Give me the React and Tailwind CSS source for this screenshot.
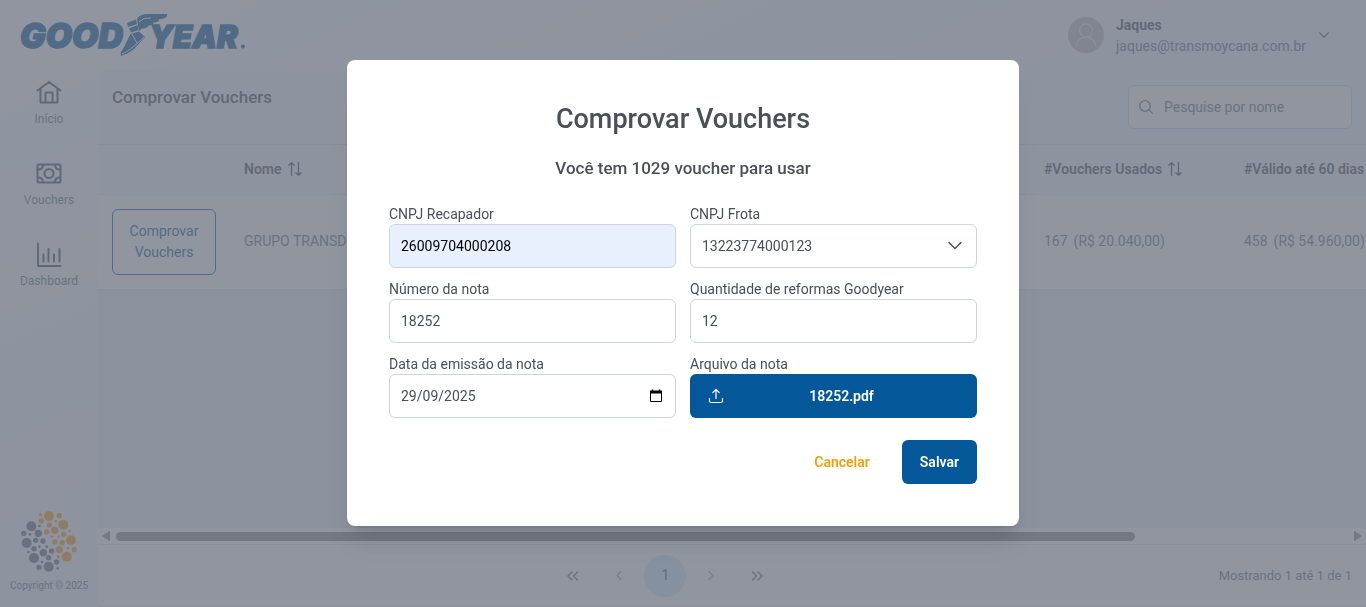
import React from "react";

const orangeDots = [
  [121, 74, 5], [147, 78, 15], [178, 77, 8], [124, 93, 8], [168, 93, 4], [148, 105, 8], [190, 104, 15],
  [164, 121, 11], [140, 126, 8], [191, 133, 8], [209, 123, 4], [155, 140, 4], [176, 140, 4], [213, 151, 15],
  [165, 156, 8], [187, 158, 8], [178, 179, 11], [204, 175, 4], [223, 179, 8], [175, 200, 5], [200, 200, 15],
];
const grayDots = [
  [94, 109, 15], [118, 108, 4], [71, 130, 8], [90, 133, 4], [115, 130, 11], [107, 151, 8], [129, 153, 8],
  [80, 159, 15], [102, 176, 8], [118, 170, 4], [140, 170, 4], [85, 186, 4], [155, 183, 8], [130, 188, 11],
  [102, 204, 15], [146, 203, 8], [126, 216, 4], [170, 216, 8], [146, 230, 15], [117, 232, 8], [173, 235, 4],
];

function DotsMark() {
  return (
    <svg viewBox="60 60 174 189" className="w-[58px] h-[63px]" aria-hidden="true">
      {orangeDots.map(([x, y, r]) => <circle key={`${x}-${y}`} cx={x} cy={y} r={r} fill="#f5a11b" />)}
      {grayDots.map(([x, y, r]) => <circle key={`${x}-${y}`} cx={x} cy={y} r={r} fill="#6a6c74" />)}
    </svg>
  );
}

function Logo() {
  return (
    <svg viewBox="0 0 228 44" className="w-[228px] h-11" role="img" aria-label="Goodyear">
      <g fill="#04589a" stroke="#04589a" strokeWidth="1.5" fontWeight="900" fontStyle="italic" fontFamily="Inter, sans-serif">
        <text x="0" y="35" fontSize="34">GOOD</text>
        <text x="129" y="35" fontSize="31">YEAR</text>
      </g>
      <g fill="#04589a">
        <path d="M107 10 L116 6.500 L117 11 L108 14 Z" />
        <path d="M109 15.500 L117.500 12 L118.500 17 L111 19.500 Z" />
        <path d="M117 6 C119 2 124 .5 130 1 L147 1 C148 4.500 143 6 138 6.500 C141 7.500 137 9.500 133 9.500 C135 10.500 131 12.500 128 12.500 C129 14.500 125 15.500 122 15.500 L119 18 L118 12 Z" />
        <path d="M110.500 21 L119 18.500 L125 24 L114 36 C109 40 104 42 101 43 C100 40 101 38 103 36 Z" />
      </g>
      <g stroke="#fff" fill="none" strokeWidth="1">
        <path d="M102 41 C109 38 117 31 124 24" />
        <path d="M112 21 L117 30 M119 9 L124 5.500 L131 5" />
      </g>
      <circle cx="223" cy="33.500" r="2" fill="#04589a" />
    </svg>
  );
}

function SortIcon() {
  return (
    <svg viewBox="0 0 14 14" className="w-[14px] h-[14px]" fill="none" stroke="currentColor" strokeWidth="1.400" strokeLinecap="round" strokeLinejoin="round" aria-hidden="true">
      <path d="M3.500 13.300V.8M.9 3.300L3.500.7l2.600 2.600M10.500.7v12.500M7.900 10.700l2.600 2.600 2.600-2.600" />
    </svg>
  );
}

function Chevron({ className, d = "M1 3.5L7 9.5L13 3.5" }) {
  return (
    <svg viewBox="0 0 14 14" className={className} fill="none" stroke="currentColor" strokeWidth="1.5" strokeLinecap="round" strokeLinejoin="round" aria-hidden="true">
      <path d={d} />
    </svg>
  );
}

const navItems = [
  { label: "Início", icon: <path d="M1.500 10.500L13 2l11.500 8.500M4.500 8.500V22.500h17V8.500M9.500 22.500V12.500h7v10" /> },
  {
    label: "Vouchers",
    icon: (
      <>
        <rect x="1.500" y="3.500" width="23" height="18" rx="1.500" />
        <circle cx="13" cy="12.500" r="4.500" />
        <path d="M2 8.500c3 0 5-1.500 5-4.500M24 8.500c-3 0-5-1.500-5-4.500M2 16.500c3 0 5 1.500 5 4.500M24 16.500c-3 0-5 1.500-5 4.500" />
      </>
    ),
  },
  { label: "Dashboard", icon: <path d="M2 1.500V24h22.500M7.500 12.500v7M12.500 7v12.500M18 12.500v7M23.500 7v12.500" /> },
];

function Sidebar() {
  return (
    <aside className="flex w-[98px] shrink-0 flex-col items-center justify-between pt-[10px] pb-3">
      <nav className="flex flex-col gap-8">
        {navItems.map((n) => (
          <a key={n.label} href="#" className="flex flex-col items-center gap-1 text-[#6c757d]">
            <svg viewBox="0 0 26 26" className="h-[26px] w-[26px] text-[#495057]" fill="none" stroke="currentColor" strokeWidth="2" strokeLinecap="round" strokeLinejoin="round" aria-hidden="true">{n.icon}</svg>
            <span className="text-[12px] leading-[19px]">{n.label}</span>
          </a>
        ))}
      </nav>
      <div className="flex flex-col items-center gap-1">
        <DotsMark />
        <span className="text-[10px] leading-[18px] text-[#6c757d]">Copyright © 2025</span>
      </div>
    </aside>
  );
}

function TopBar() {
  return (
    <header className="flex h-[70px] shrink-0 items-center justify-between pr-9 pl-5">
      <Logo />
      <button type="button" className="flex items-center gap-3 text-left text-[14px]">
        <svg viewBox="0 0 36 36" className="h-9 w-9" aria-hidden="true">
          <circle cx="18" cy="18" r="18" fill="#c0bfc2" />
          <g fill="none" stroke="#e4e4e6" strokeWidth="1.300">
            <circle cx="18" cy="13.500" r="6.500" />
            <path d="M8.500 29c0-5.500 4-9 9.500-9s9.500 3.500 9.500 9" strokeLinecap="round" />
          </g>
        </svg>
        <span className="flex flex-col pt-[2px]">
          <span className="leading-[21px] font-bold text-[#495057]">Jaques</span>
          <span className="leading-[21px] text-[#6c757d]">jaques@transmoycana.com.br</span>
        </span>
        <Chevron className="h-3 w-3 text-[#495057]" d="M2 4.500L7 9.500L12 4.500" />
      </button>
    </header>
  );
}

function VoucherTable() {
  return (
    <div className="min-h-0 flex-1 overflow-hidden bg-[#e9f1f7]">
      <table className="w-[1541px] table-fixed border-collapse text-left text-[14px] text-[#6c757d]">
        <colgroup>
          <col className="w-[132px]" />
          <col className="w-[800px]" />
          <col className="w-[200px]" />
          <col />
        </colgroup>
        <thead>
          <tr className="h-[49px] border-b border-[#dee2e6] bg-[#f8f9fa] text-[#495057]">
            <th className="px-[14px]" />
            <th className="px-[14px] font-semibold"><span className="flex items-center gap-[6px]">Nome <SortIcon /></span></th>
            <th className="px-[14px] font-semibold"><span className="flex items-center gap-[6px]">#Vouchers Usados <SortIcon /></span></th>
            <th className="px-[14px] font-semibold">#Válido até 60 dias</th>
          </tr>
        </thead>
        <tbody>
          <tr className="h-[95px] border-b border-[#dee2e6] bg-white">
            <td className="px-[14px]">
              <button type="button" className="w-full rounded-md border border-[#04589a] px-4 py-[11px] leading-[21px] text-[#04589a]">Comprovar Vouchers</button>
            </td>
            <td className="px-[14px]">GRUPO TRANSDE</td>
            <td className="px-[14px]"><span className="flex gap-[6px]"><span>167</span><span>(R$ 20.040,00)</span></span></td>
            <td className="px-[14px]"><span className="flex gap-[6px]"><span>458</span><span>(R$ 54.960,00)</span></span></td>
          </tr>
        </tbody>
      </table>
    </div>
  );
}

function ScrollTrack() {
  return (
    <div className="flex h-4 shrink-0 items-center gap-1 bg-white px-1 text-[#8b8b8b]">
      <svg viewBox="0 0 8 10" className="h-[10px] w-2" fill="currentColor" aria-hidden="true"><path d="M7 .5Q8 0 8 1v8q0 1-1 .5L.5 5.500q-.5-.5 0-1z" /></svg>
      <div className="flex-1 pl-[2px]"><div className="h-[9px] w-19/23 rounded-full bg-[#8b8b8b]" /></div>
      <svg viewBox="0 0 8 10" className="h-[10px] w-2" fill="currentColor" aria-hidden="true"><path d="M1 .5Q0 0 0 1v8q0 1 1 .5l6.500-4q.5-.5 0-1z" /></svg>
    </div>
  );
}

const pageButton = "flex h-[42px] w-[42px] items-center justify-center rounded-full";

function Paginator() {
  return (
    <footer className="flex h-[63px] shrink-0 items-center border-y border-[#dee2e6] bg-white px-[14px] text-[14px] text-[#6c757d]">
      <div className="flex flex-1 justify-center gap-1">
        <button type="button" aria-label="Primeira página" className={pageButton}><Chevron className="h-[14px] w-[14px]" d="M6 3L2 7l4 4M11.500 3l-4 4 4 4" /></button>
        <button type="button" aria-label="Página anterior" className={`${pageButton} opacity-60`}><Chevron className="h-[14px] w-[14px]" d="M9 2.500L5 6.500l4 4" /></button>
        <button type="button" className={`${pageButton} bg-[#d4effa] text-[#495057]`}>1</button>
        <button type="button" aria-label="Próxima página" className={`${pageButton} opacity-60`}><Chevron className="h-[14px] w-[14px]" d="M5 2.500l4 4-4 4" /></button>
        <button type="button" aria-label="Última página" className={pageButton}><Chevron className="h-[14px] w-[14px]" d="M2.500 3l4 4-4 4M8 3l4 4-4 4" /></button>
      </div>
      <span className="text-[13px]">Mostrando 1 até 1 de 1</span>
    </footer>
  );
}

const control = "h-11 w-full rounded-md border border-[#ced4da] px-[11px] text-[14px]";

function Field({ id, label, children }) {
  return (
    <div className="flex flex-col">
      <label htmlFor={id} className="text-[14px] leading-5 text-[#495057]">{label}</label>
      {children}
    </div>
  );
}

function VoucherDialog() {
  return (
    <div className="fixed inset-0 flex items-start justify-center bg-[#6b7280]/75 pt-[60px]">
      <form role="dialog" aria-modal="true" aria-labelledby="dialog-title" className="w-full max-w-2xl rounded-lg bg-white p-[42px] text-[#495057] shadow-xl">
        <h2 id="dialog-title" className="text-center text-[27px] leading-[34px] font-medium">Comprovar Vouchers</h2>
        <p className="mt-[21px] text-center text-[17px] leading-[22px] font-medium">Você tem 1029 voucher para usar</p>
        <div className="mt-[25px] grid grid-cols-2 gap-x-[14px] gap-y-[11px]">
          <Field id="recapador" label="CNPJ Recapador">
            <input id="recapador" defaultValue="26009704000208" className={`${control} bg-[#e8f0fe] text-black`} />
          </Field>
          <Field id="frota" label="CNPJ Frota">
            <div className="relative">
              <select id="frota" className={`${control} appearance-none bg-white`}><option>13223774000123</option></select>
              <Chevron className="pointer-events-none absolute top-[15px] right-[15px] h-[14px] w-[14px]" />
            </div>
          </Field>
          <Field id="numero" label="Número da nota">
            <input id="numero" defaultValue="18252" className={control} />
          </Field>
          <Field id="quantidade" label="Quantidade de reformas Goodyear">
            <input id="quantidade" defaultValue="12" className={control} />
          </Field>
          <Field id="data" label="Data da emissão da nota">
            <div className="relative">
              <input id="data" defaultValue="29/09/2025" className={control} />
              <button type="button" aria-label="Abrir calendário" className="absolute top-[15px] right-[13px] text-black">
                <svg viewBox="0 0 14 14" className="h-[14px] w-[14px]" fill="none" stroke="currentColor" aria-hidden="true">
                  <path d="M1.500 3v9.500h11V3" />
                  <path d="M1 3h12" strokeWidth="3" />
                  <path d="M3.500 .5v2M10.500 .5v2" strokeWidth="1.500" />
                </svg>
              </button>
            </div>
          </Field>
          <Field id="arquivo" label="Arquivo da nota">
            <button id="arquivo" type="button" className="flex h-11 w-full items-center rounded-md bg-[#04589a] px-[18px] text-[14px] font-semibold text-white">
              <svg viewBox="0 0 16 16" className="h-4 w-4" fill="none" stroke="currentColor" strokeWidth="1.200" strokeLinecap="round" strokeLinejoin="round" aria-hidden="true">
                <path d="M8 10.500V1.500M4.800 4.700L8 1.500l3.200 3.200M1.500 10.500V13q0 1.500 1.500 1.500h10q1.500 0 1.500-1.500v-2.500" />
              </svg>
              <span className="flex-1">18252.pdf</span>
            </button>
          </Field>
        </div>
        <div className="mt-[22px] flex justify-end gap-[14px] text-[14px] font-semibold">
          <button type="button" className="h-11 rounded-md px-[18px] text-[#f59e0b]">Cancelar</button>
          <button type="submit" className="h-11 rounded-md bg-[#04589a] px-[18px] text-white">Salvar</button>
        </div>
      </form>
    </div>
  );
}

export default function App() {
  return (
    <div className="flex h-screen flex-col overflow-hidden bg-linear-to-br from-white via-[#f3f6f9] to-[#e6eff5] font-['Roboto',sans-serif]">
      <TopBar />
      <div className="flex min-h-0 flex-1">
        <Sidebar />
        <main className="flex min-w-0 flex-1 flex-col">
          <div className="flex h-[75px] shrink-0 items-center justify-between rounded-tl-lg border-b border-[#dee2e6] bg-[#f8f9fa] px-[14px]">
            <h1 className="mb-5 text-[17px] leading-[22px] font-medium text-[#495057]">Comprovar Vouchers</h1>
            <label className="flex h-11 w-56 items-center gap-[11px] rounded-md border border-[#ced4da] bg-white px-[10px] text-[#6c757d]">
              <svg viewBox="0 0 14 14" className="h-[14px] w-[14px]" fill="none" stroke="currentColor" strokeWidth="1.300" strokeLinecap="round" aria-hidden="true">
                <circle cx="6" cy="6" r="5.300" />
                <path d="M9.900 9.900l3.500 3.500" />
              </svg>
              <input aria-label="Pesquise por nome" placeholder="Pesquise por nome" className="min-w-0 flex-1 text-[14px] outline-none placeholder:text-[#6c757d]" />
            </label>
          </div>
          <VoucherTable />
          <ScrollTrack />
          <Paginator />
        </main>
      </div>
      <VoucherDialog />
    </div>
  );
}
